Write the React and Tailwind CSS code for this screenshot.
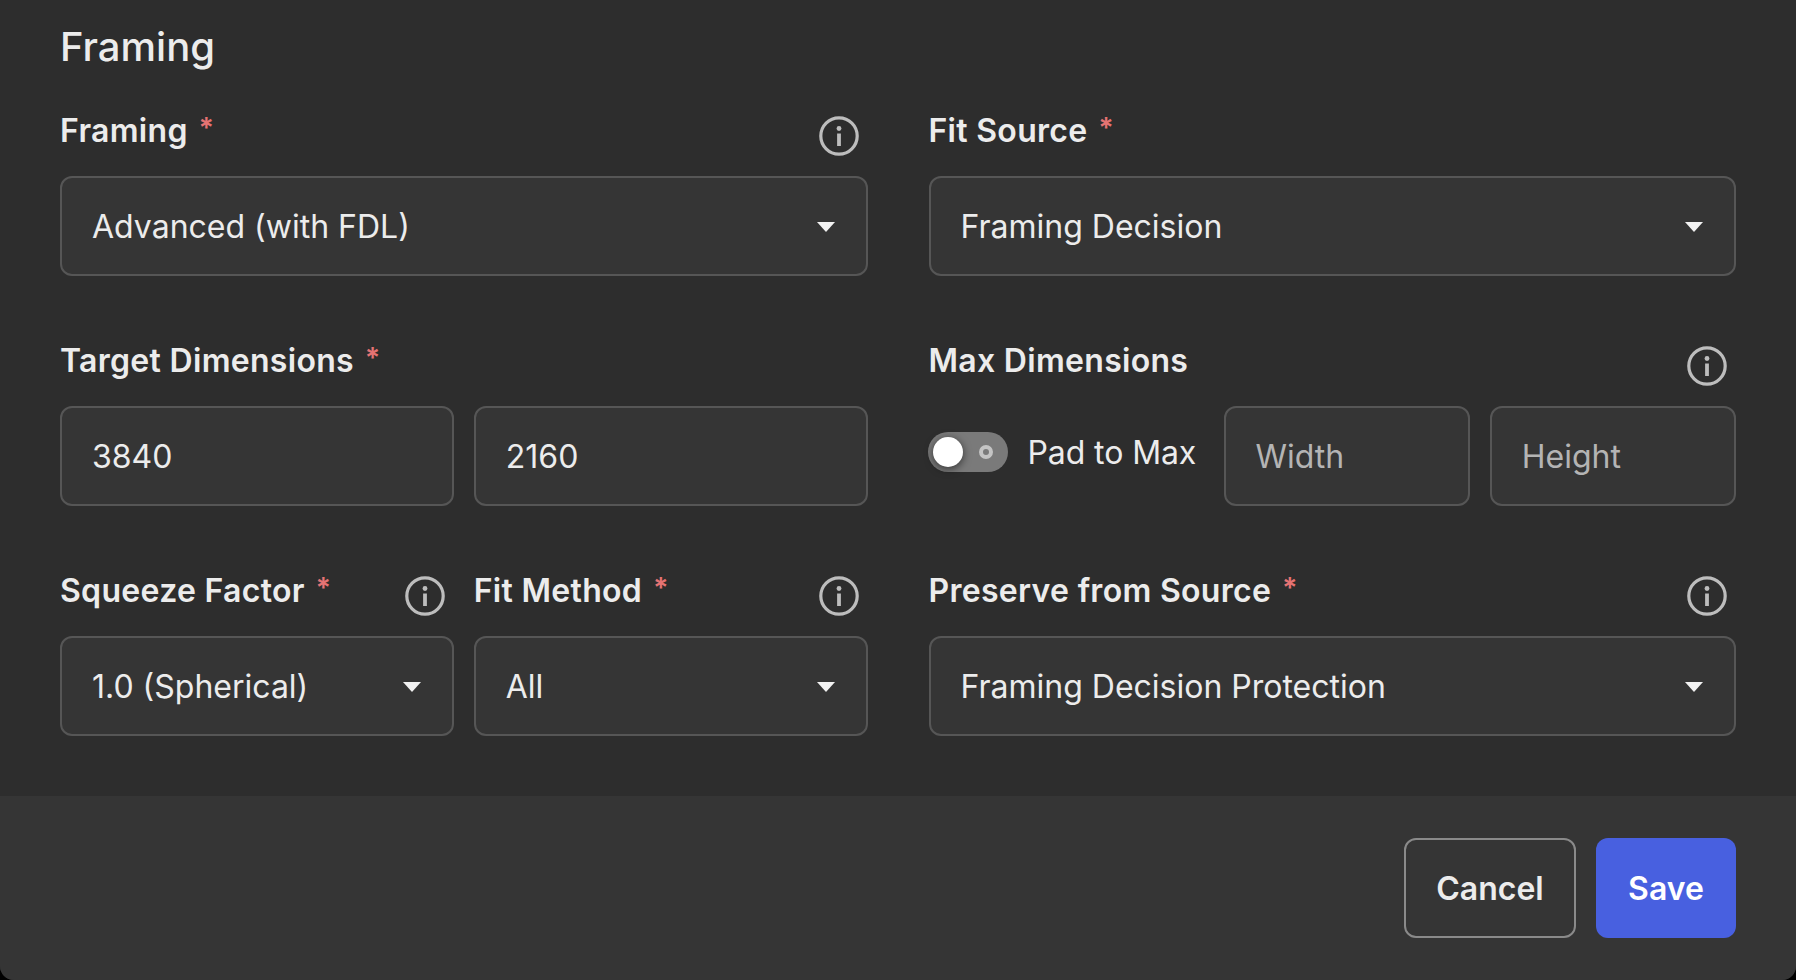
const ff = { fontFamily: 'Inter, sans-serif' };

function InfoIcon() {
    return (
        <svg className="h-10 w-10 shrink-0 text-[#bdbdbd]" viewBox="0 0 40 40" fill="none" stroke="currentColor">
            <circle cx="20" cy="20" r="18.2" strokeWidth="3.2" />
            <line x1="20" y1="17.5" x2="20" y2="30" strokeWidth="3.8" />
            <circle cx="20" cy="12.5" r="2.4" fill="currentColor" stroke="none" />
        </svg>
    );
}

function Label({ text, required, info }) {
    return (
        <div className="flex h-[60px] items-start justify-between pr-[9px]">
            <div className="flex items-start text-[32px] leading-[30px] font-semibold tracking-[0.3px] text-[#ececec]">
                <span>{text}</span>
                {required && <span className="ml-[11px] text-[28px] leading-[24px] text-[#e57373]">*</span>}
            </div>
            {info && <InfoIcon />}
        </div>
    );
}

function Select({ value }) {
    return (
        <div className="flex h-[100px] items-center justify-between rounded-xl border-2 border-[#565656] bg-[#353535] pr-[31px] pl-[30px] text-[32px] text-[#ececec]">
            <span className="pt-0.5">{value}</span>
            <svg className="mt-0.5 h-[10px] w-[18px] shrink-0" viewBox="0 0 18 10" fill="#f2f2f2">
                <path d="M0 0h18L9 10z" />
            </svg>
        </div>
    );
}

function TextInput({ value, placeholder, className }) {
    return (
        <div className={'flex h-[100px] items-center rounded-xl border-2 border-[#565656] bg-[#353535] pt-0.5 pl-[30px] text-[32px] ' + (value ? 'text-[#ececec] ' : 'text-[#b4b4b4] ') + className}>
            {value || placeholder}
        </div>
    );
}

export default function App() {
    return (
        <div className="h-[980px] w-full overflow-hidden bg-black" style={ff}>
            <div className="flex h-full flex-col overflow-hidden rounded-b-[14px] bg-[#2d2d2d]">
                <div className="flex-1 px-[60px]">
                    <h2 className="flex h-[116px] items-start pt-[26px] text-[40px] leading-[42px] font-medium text-[#ececec]">Framing</h2>

                    <div className="grid grid-cols-2 gap-x-[61px] gap-y-[70px]">
                        <div>
                            <Label text="Framing" required info />
                            <Select value="Advanced (with FDL)" />
                        </div>
                        <div>
                            <Label text="Fit Source" required />
                            <Select value="Framing Decision" />
                        </div>

                        <div>
                            <Label text="Target Dimensions" required />
                            <div className="flex gap-5">
                                <TextInput value="3840" className="flex-1" />
                                <TextInput value="2160" className="flex-1" />
                            </div>
                        </div>
                        <div>
                            <Label text="Max Dimensions" info />
                            <div className="flex items-center gap-5">
                                <div className="-ml-px flex w-[276px] shrink-0 items-center gap-5 pb-2">
                                    <div className="flex h-10 w-20 shrink-0 items-center justify-between rounded-full bg-[#7a7a7a] pr-[15px] pl-[5px]">
                                        <div className="h-[30px] w-[30px] rounded-full bg-white shadow-[0_2px_8px_rgba(0,0,0,0.6)]" />
                                        <div className="h-[14px] w-[14px] rounded-full border-4 border-[#c4c4c4]" />
                                    </div>
                                    <span className="pt-0.5 text-[32px] tracking-[-0.1px] whitespace-nowrap text-[#ececec]">Pad to Max</span>
                                </div>
                                <TextInput placeholder="Width" className="flex-1" />
                                <TextInput placeholder="Height" className="flex-1" />
                            </div>
                        </div>

                        <div className="grid grid-cols-2 gap-5">
                            <div>
                                <Label text="Squeeze Factor" required info />
                                <Select value="1.0 (Spherical)" />
                            </div>
                            <div>
                                <Label text="Fit Method" required info />
                                <Select value="All" />
                            </div>
                        </div>
                        <div>
                            <Label text="Preserve from Source" required info />
                            <Select value="Framing Decision Protection" />
                        </div>
                    </div>
                </div>

                <div className="flex h-[184px] items-center justify-end gap-5 bg-[#353535] pr-[60px]">
                    <button className="h-[100px] w-[172px] rounded-xl border-2 border-[#8a8a8a] pt-0.5 text-[32px] font-semibold text-[#ececec]">Cancel</button>
                    <button className="h-[100px] w-[140px] rounded-xl bg-[#4860e0] pt-0.5 text-[32px] font-semibold text-white">Save</button>
                </div>
            </div>
        </div>
    );
}
